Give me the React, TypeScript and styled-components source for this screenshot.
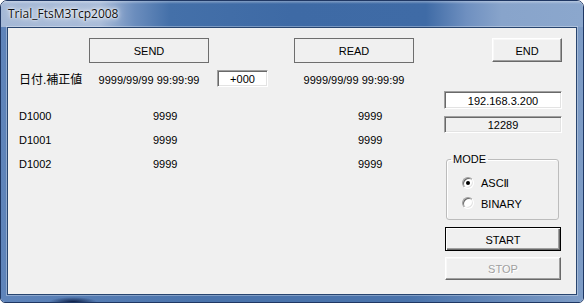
import styled, { createGlobalStyle } from "styled-components";

const GlobalStyle = createGlobalStyle`
  html, body {
    margin: 0;
    padding: 0;
    background: #ffffff;
  }
  * {
    box-sizing: border-box;
  }
`;

const FONT = `"Liberation Sans", "DejaVu Sans", "Noto Sans CJK JP", sans-serif`;

const Window = styled.div`
  width: 584px;
  height: 303px;
  border: 1px solid #1f3763;
  border-radius: 7px 7px 5px 5px;
  overflow: hidden;
  display: flex;
  flex-direction: column;
  font-family: ${FONT};
  font-size: 11px;
  color: #000;
`;

const TitleBar = styled.div`
  height: 26px;
  flex-shrink: 0;
  display: flex;
  align-items: center;
  padding: 0 0 1px 7px;
  background:
    linear-gradient(to bottom, rgba(255, 255, 255, 0.35), rgba(255, 255, 255, 0) 3px),
    linear-gradient(
      to right,
      #a4b8d6 0%,
      #a9bcd9 17%,
      #6b8dbd 23%,
      #4470a9 29%,
      #3e6aa5 50%,
      #3f6ba6 73%,
      #6f90c0 80%,
      #88a4cb 86%,
      #8ba7cd 100%
    );
`;

const Title = styled.span`
  font-family: "Open Sans", "Noto Sans", sans-serif;
  font-size: 12px;
  color: #111;
  text-shadow: 0 0 8px #fff, 0 0 4px #fff, 0 0 2px #fff;
`;

const Frame = styled.div`
  flex: 1;
  display: flex;
  padding: 0 6px 7px 6px;
  background:
    radial-gradient(ellipse 24px 5px at 72px 100%, #0b1c44, rgba(11, 28, 68, 0)),
    linear-gradient(to right, #5f84ba 0%, #4a73ab 35%, #4a73ab 70%, #7e9cc6 100%);
`;

const Client = styled.div`
  flex: 1;
  display: flex;
  padding: 10px 14px 0 11px;
  background: #f0f0f0;
  border: 1px solid #28456f;
  box-shadow: 0 0 0 1px rgba(255, 255, 255, 0.3);
`;

const Left = styled.div`
  display: flex;
  flex-direction: column;
`;

const Row = styled.div<{ $height: number; $top?: number }>`
  display: grid;
  grid-template-columns: 70px 120px 85px 120px;
  align-items: center;
  height: ${(p) => p.$height}px;
  margin-top: ${(p) => p.$top ?? 0}px;
`;

const FlatButton = styled.div`
  height: 25px;
  border: 1px solid #6e6e6e;
  display: flex;
  align-items: center;
  justify-content: center;
  padding-top: 1px;
`;

const Label = styled.div<{ $cjk?: boolean }>`
  font-size: ${(p) => (p.$cjk ? 12 : 11)}px;
  padding-top: ${(p) => (p.$cjk ? 0 : 1)}px;
`;

const DateText = styled.div`
  text-align: center;
  padding-top: 2px;
`;

const Value = styled.div`
  padding-left: 64px;
  padding-top: 1px;
`;

const Field = styled.div<{ $white?: boolean; $width?: number; $height: number }>`
  width: ${(p) => (p.$width ? `${p.$width}px` : "auto")};
  height: ${(p) => p.$height}px;
  background: ${(p) => (p.$white ? "#ffffff" : "#f0f0f0")};
  border: 1px solid;
  border-color: #a0a0a0 #ffffff #ffffff #a0a0a0;
  box-shadow: inset 1px 1px #696969, inset -1px -1px #e3e3e3;
  display: flex;
  align-items: center;
  justify-content: center;
  padding-top: 1px;
`;

const OffsetField = styled(Field)`
  margin-left: 8px;
`;

const Right = styled.div`
  margin-left: auto;
  width: 118px;
  display: flex;
  flex-direction: column;
`;

const Button3D = styled.div<{ $default?: boolean; $disabled?: boolean; $width?: number; $height: number }>`
  width: ${(p) => (p.$width ? `${p.$width}px` : "auto")};
  height: ${(p) => p.$height}px;
  display: flex;
  align-items: center;
  justify-content: center;
  padding-top: 1px;
  background: #f0f0f0;
  color: ${(p) => (p.$disabled ? "#a0a0a0" : "#000")};
  border: 1px solid;
  border-color: ${(p) => (p.$default ? "#000" : "#ffffff #696969 #696969 #ffffff")};
  box-shadow: ${(p) =>
    p.$default
      ? "inset 1px 1px #ffffff, inset -1px -1px #696969, inset -2px -2px #a0a0a0"
      : "inset -1px -1px #a0a0a0, inset 1px 1px #f8f8f8"};
  text-shadow: ${(p) => (p.$disabled ? "1px 1px #ffffff" : "none")};
`;

const EndButton = styled(Button3D)`
  align-self: flex-end;
`;

const SideButton = styled(Button3D)<{ $gap: number }>`
  margin: ${(p) => p.$gap}px 1px 0 1px;
`;

const Spaced = styled.div<{ $gap: number }>`
  margin-top: ${(p) => p.$gap}px;
`;

const Group = styled.fieldset`
  margin: 20px 3px 0 2px;
  padding: 0;
  border: 1px solid #bcbcbc;
  border-radius: 3px;
  box-shadow: inset 1px 1px #ffffff;
`;

const Legend = styled.legend`
  margin-left: 4px;
  padding: 0 2px;
  font-size: 11px;
  line-height: 13px;
`;

const RadioList = styled.div`
  display: flex;
  flex-direction: column;
  padding: 7px 0 6px 15px;
`;

const RadioRow = styled.div`
  height: 20px;
  display: flex;
  align-items: center;
  gap: 7px;
`;

const RadioDot = styled.span<{ $checked?: boolean }>`
  width: 12px;
  height: 12px;
  border-radius: 50%;
  border: 1px solid;
  border-color: #a0a0a0 #ffffff #ffffff #a0a0a0;
  box-shadow: inset 1px 1px #696969, inset -1px -1px #e3e3e3;
  background: #ffffff;
  display: flex;
  align-items: center;
  justify-content: center;

  &::after {
    content: "";
    width: 4px;
    height: 4px;
    border-radius: 50%;
    background: ${(p) => (p.$checked ? "#000" : "transparent")};
  }
`;

const RadioText = styled.span`
  font-size: 11px;
  padding-top: 1px;
`;

const rows = [
  { name: "D1000", send: "9999", read: "9999" },
  { name: "D1001", send: "9999", read: "9999" },
  { name: "D1002", send: "9999", read: "9999" },
];

const App = () => {
  return (
    <>
      <GlobalStyle />
      <Window>
        <TitleBar>
          <Title>Trial_FtsM3Tcp2008</Title>
        </TitleBar>
        <Frame>
          <Client>
            <Left>
              <Row $height={25}>
                <span />
                <FlatButton>SEND</FlatButton>
                <span />
                <FlatButton>READ</FlatButton>
              </Row>
              <Row $height={17} $top={7}>
                <Label $cjk>日付.補正値</Label>
                <DateText>9999/99/99 99:99:99</DateText>
                <OffsetField $white $width={51} $height={17}>
                  +000
                </OffsetField>
                <DateText>9999/99/99 99:99:99</DateText>
              </Row>
              {rows.map((r, i) => (
                <Row key={r.name} $height={24} $top={i === 0 ? 16 : 0}>
                  <Label>{r.name}</Label>
                  <Value>{r.send}</Value>
                  <span />
                  <Value>{r.read}</Value>
                </Row>
              ))}
            </Left>
            <Right>
              <EndButton $width={70} $height={24}>
                END
              </EndButton>
              <Spaced $gap={29}>
                <Field $white $height={18}>
                  192.168.3.200
                </Field>
              </Spaced>
              <Spaced $gap={7}>
                <Field $height={17}>12289</Field>
              </Spaced>
              <Group>
                <Legend>MODE</Legend>
                <RadioList>
                  <RadioRow>
                    <RadioDot $checked />
                    <RadioText>ASCⅡ</RadioText>
                  </RadioRow>
                  <RadioRow>
                    <RadioDot />
                    <RadioText>BINARY</RadioText>
                  </RadioRow>
                </RadioList>
              </Group>
              <SideButton $default $gap={7} $height={24}>
                START
              </SideButton>
              <SideButton $disabled $gap={6} $height={23}>
                STOP
              </SideButton>
            </Right>
          </Client>
        </Frame>
      </Window>
    </>
  );
};

export default App;
